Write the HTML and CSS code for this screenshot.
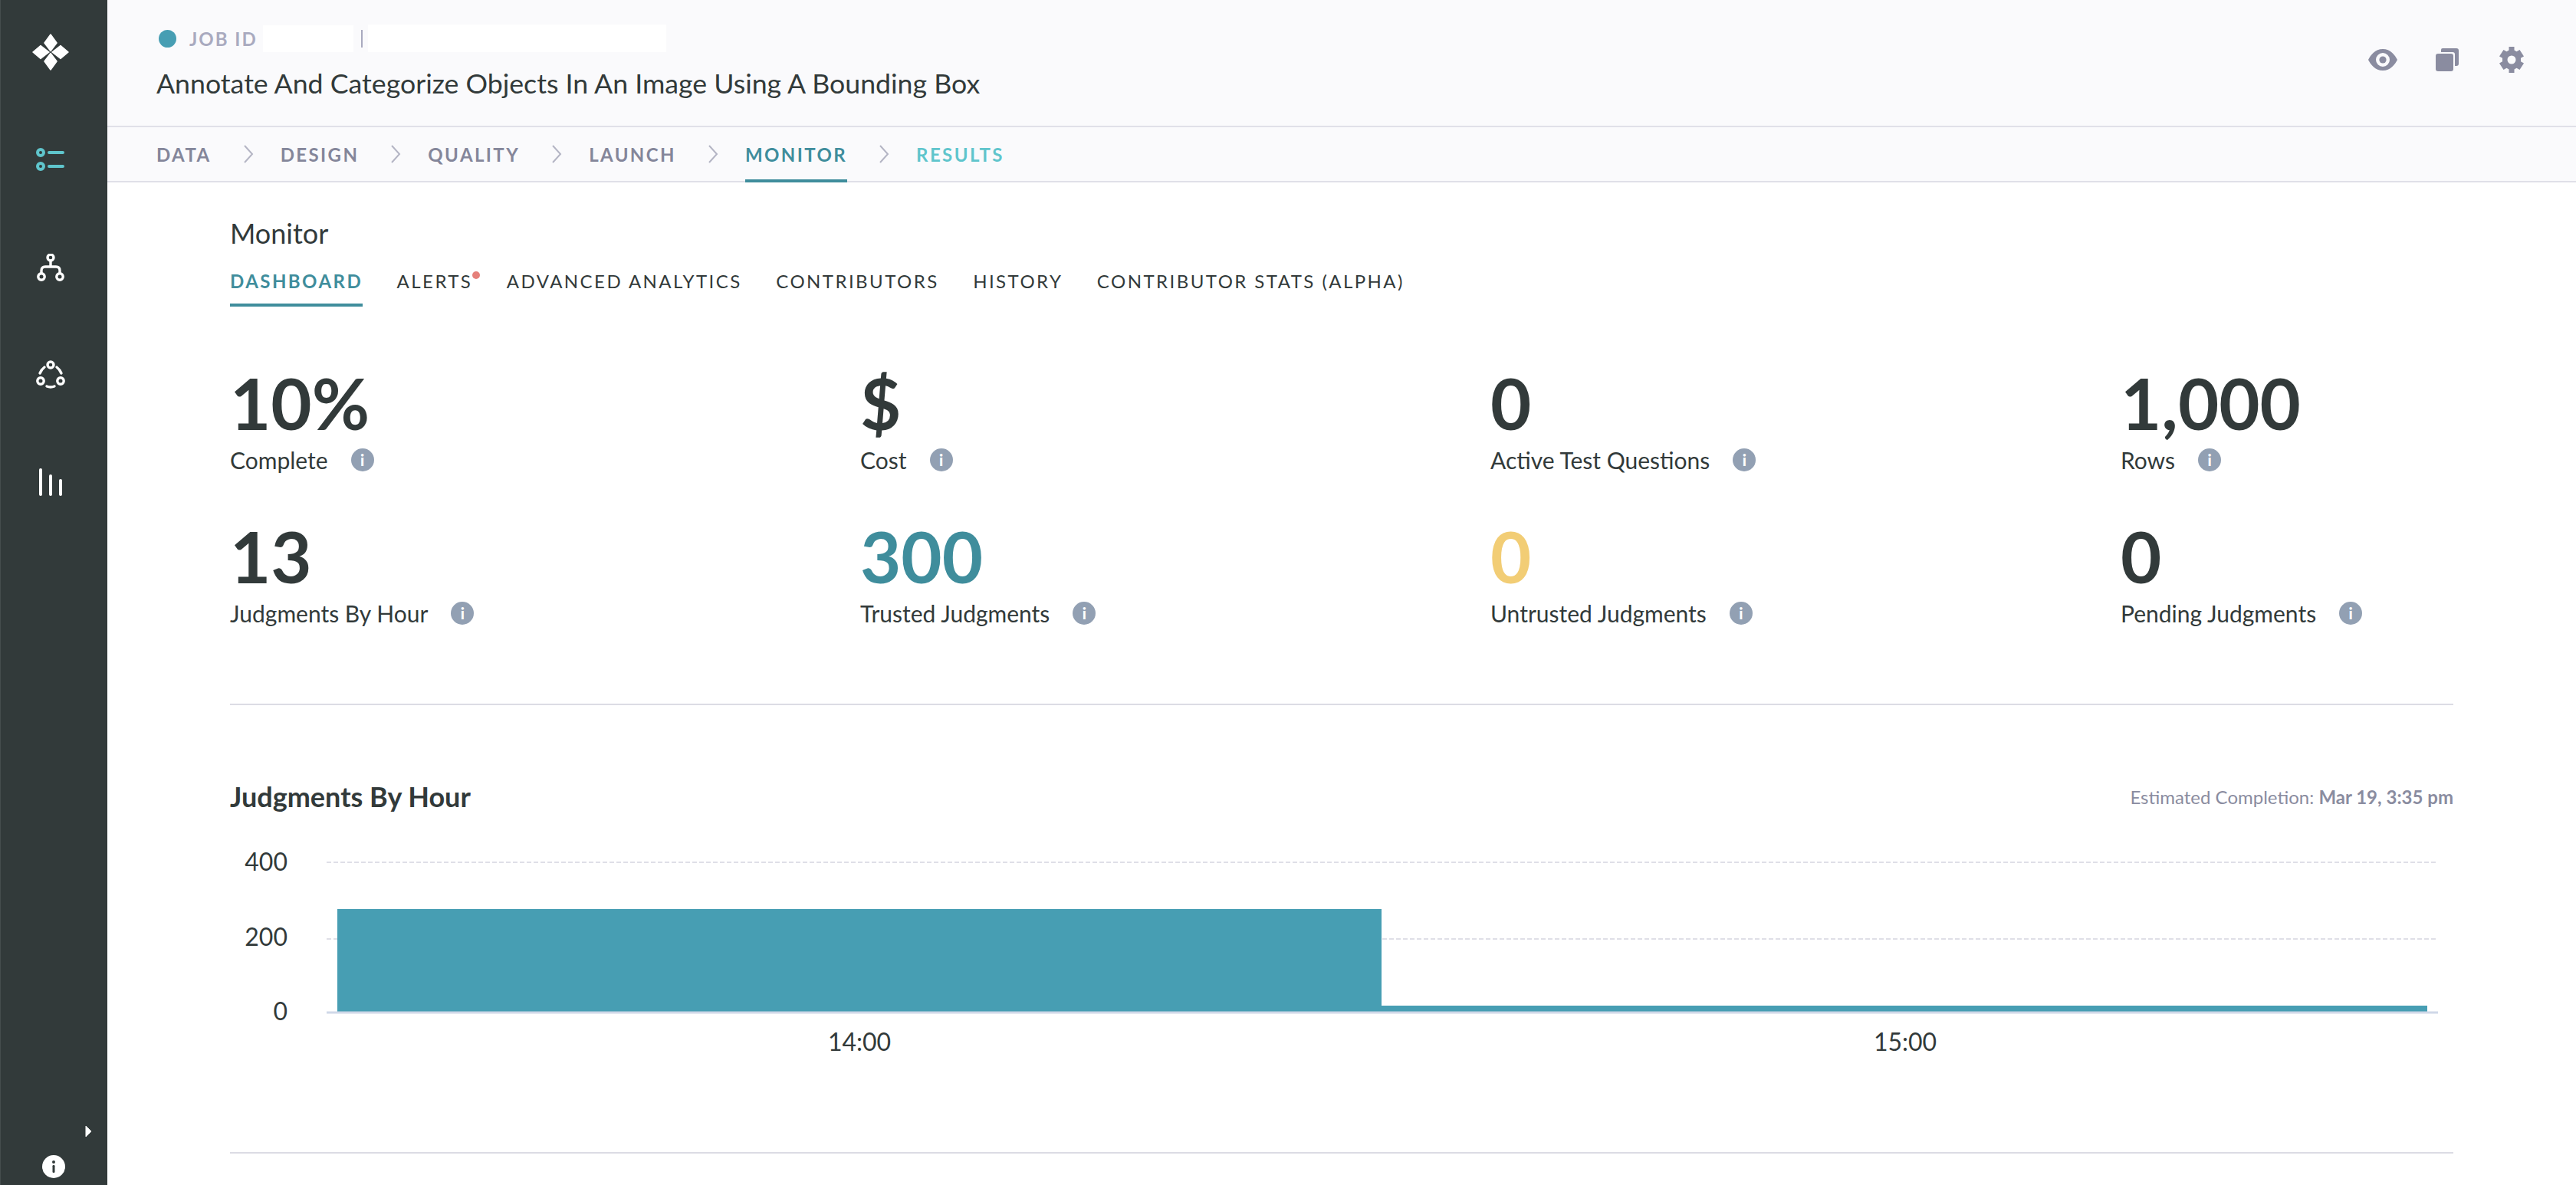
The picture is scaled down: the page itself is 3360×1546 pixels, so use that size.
FILE: index.html
```html
<!DOCTYPE html>
<html lang="en">
<head>
    <meta charset="UTF-8">
    <title>Monitor</title>
    <link rel="stylesheet" href="styles.css">
</head>
<body>
    <aside class="sidebar">
        <svg class="logo" viewBox="0 0 48 48" width="48" height="48">
            <g fill="#fff" stroke="#fff" stroke-width="1.5" stroke-linejoin="round">
                <path d="M24 1 L32 12 L24 22.500 L16 12 Z"/>
                <path d="M24 25.500 L32 36 L24 47 L16 36 Z"/>
                <path d="M1 24 L11 15.500 L22 24 L11 32.500 Z"/>
                <path d="M26 24 L37 15.500 L47 24 L37 32.500 Z"/>
            </g>
        </svg>
        <svg class="side-icon icon-list" viewBox="0 0 38 30" width="38" height="30">
            <g fill="none" stroke="#5fc5cc" stroke-width="4" stroke-linecap="round">
                <circle cx="6" cy="6" r="4"/>
                <circle cx="6" cy="24" r="4"/>
                <path d="M17 6 H35 M17 24 H35"/>
            </g>
        </svg>
        <svg class="side-icon icon-tree" viewBox="0 0 36 36" width="36" height="36">
            <g fill="none" stroke="#fff" stroke-width="3.4">
                <circle cx="18" cy="5" r="4"/>
                <circle cx="6" cy="30" r="4.2"/>
                <circle cx="30" cy="30" r="4.2"/>
                <path d="M18 9 V17 M6 26 V22 Q6 17 11 17 H25 Q30 17 30 22 V26"/>
            </g>
        </svg>
        <svg class="side-icon" viewBox="0 0 38 38" width="38" height="38">
            <g fill="none" stroke="#fff" stroke-width="3.4" stroke-linecap="round">
                <circle cx="19" cy="6" r="4"/>
                <circle cx="6" cy="27" r="4.2"/>
                <circle cx="32" cy="27" r="4.2"/>
                <path d="M5 17 Q7 12 11 9 M27 9 Q31 12 33 17 M14 34 Q19 36 24 34"/>
            </g>
        </svg>
        <svg class="side-icon" viewBox="0 0 34 36" width="34" height="36">
            <g fill="none" stroke="#fff" stroke-width="4" stroke-linecap="round">
                <path d="M4 2 V34 M17 10 V34 M30 16 V34"/>
            </g>
        </svg>
        <svg class="side-arrow" viewBox="0 0 9 16" width="9" height="16">
            <path d="M1 1 L8 8 L1 15 Z" fill="#fff" stroke="#fff" stroke-linejoin="round"/>
        </svg>
        <svg class="side-info" viewBox="0 0 30 30" width="30" height="30">
            <circle cx="15" cy="15" r="15" fill="#fff"/>
            <circle cx="15" cy="9" r="2" fill="#323a3a"/>
            <rect x="13.5" y="13" width="3" height="10" rx="1.2" fill="#323a3a"/>
        </svg>
    </aside>

    <div class="main">
        <header class="job-header">
            <div>
                <div class="job-meta">
                    <span class="status-dot"></span>
                    <span class="job-id">JOB ID</span>
                    <span class="redacted short"></span>
                    <span class="meta-sep"></span>
                    <span class="redacted long"></span>
                </div>
                <h1 class="job-title">Annotate And Categorize Objects In An Image Using A Bounding Box</h1>
            </div>
            <div class="job-actions">
                <svg viewBox="0 0 38 28" width="38" height="28">
                    <path fill-rule="evenodd" fill="#8a8ca0" d="M19 0 C29 0 35 8 38 14 C35 20 29 28 19 28 C9 28 3 20 0 14 C3 8 9 0 19 0 Z M19 5 A9 9 0 1 0 19 23 A9 9 0 1 0 19 5 Z"/>
                    <circle cx="19" cy="14" r="4.6" fill="#8a8ca0"/>
                </svg>
                <svg viewBox="0 0 30 30" width="30" height="30">
                    <path fill="#8a8ca0" d="M9 0 H27 Q30 0 30 3 V20 Q30 23 27 23 H25 V8 Q25 5 22 5 H7 V2 Q7 0 9 0 Z"/>
                    <rect x="0" y="7" width="23" height="23" rx="3" fill="#8a8ca0"/>
                </svg>
                <svg class="gear" viewBox="0 0 32 34" width="32" height="34">
                    <path fill-rule="evenodd" fill="#8a8ca0" d="M12.500 0 H19.500 V4.600 L22.500 6.300 L26.500 4 L32 12.500 L28 14.800 V19.200 L32 21.500 L26.500 30 L22.500 27.700 L19.500 29.400 V34 H12.500 V29.400 L9.500 27.700 L5.500 30 L0 21.500 L4 19.200 V14.800 L0 12.500 L5.500 4 L9.500 6.300 L12.500 4.600 Z M16 11.500 A5.500 5.500 0 1 0 16 22.500 A5.500 5.500 0 1 0 16 11.500 Z"/>
                </svg>
            </div>
        </header>

        <nav class="steps">
            <a class="step">DATA</a>
            <svg class="chevron" viewBox="0 0 14 24" width="14" height="24"><path d="M2 1 L12 12 L2 23" fill="none" stroke="#b4b5c4" stroke-width="2"/></svg>
            <a class="step">DESIGN</a>
            <svg class="chevron" viewBox="0 0 14 24" width="14" height="24"><path d="M2 1 L12 12 L2 23" fill="none" stroke="#b4b5c4" stroke-width="2"/></svg>
            <a class="step">QUALITY</a>
            <svg class="chevron" viewBox="0 0 14 24" width="14" height="24"><path d="M2 1 L12 12 L2 23" fill="none" stroke="#b4b5c4" stroke-width="2"/></svg>
            <a class="step">LAUNCH</a>
            <svg class="chevron" viewBox="0 0 14 24" width="14" height="24"><path d="M2 1 L12 12 L2 23" fill="none" stroke="#b4b5c4" stroke-width="2"/></svg>
            <a class="step active">MONITOR</a>
            <svg class="chevron" viewBox="0 0 14 24" width="14" height="24"><path d="M2 1 L12 12 L2 23" fill="none" stroke="#b4b5c4" stroke-width="2"/></svg>
            <a class="step next">RESULTS</a>
        </nav>

        <main class="content">
            <h2 class="page-title">Monitor</h2>
            <div class="tabs">
                <a class="tab active">DASHBOARD</a>
                <a class="tab alerts">ALERTS</a>
                <a class="tab">ADVANCED ANALYTICS</a>
                <a class="tab">CONTRIBUTORS</a>
                <a class="tab">HISTORY</a>
                <a class="tab">CONTRIBUTOR STATS (ALPHA)</a>
            </div>

            <section class="stats">
                <div class="stat">
                    <div class="stat-value">10%</div>
                    <div class="stat-label">Complete<span class="info">i</span></div>
                </div>
                <div class="stat">
                    <div class="stat-value">$</div>
                    <div class="stat-label">Cost<span class="info">i</span></div>
                </div>
                <div class="stat">
                    <div class="stat-value">0</div>
                    <div class="stat-label">Active Test Questions<span class="info">i</span></div>
                </div>
                <div class="stat">
                    <div class="stat-value">1,000</div>
                    <div class="stat-label">Rows<span class="info">i</span></div>
                </div>
                <div class="stat">
                    <div class="stat-value">13</div>
                    <div class="stat-label">Judgments By Hour<span class="info">i</span></div>
                </div>
                <div class="stat">
                    <div class="stat-value trusted">300</div>
                    <div class="stat-label">Trusted Judgments<span class="info">i</span></div>
                </div>
                <div class="stat">
                    <div class="stat-value untrusted">0</div>
                    <div class="stat-label">Untrusted Judgments<span class="info">i</span></div>
                </div>
                <div class="stat">
                    <div class="stat-value">0</div>
                    <div class="stat-label">Pending Judgments<span class="info">i</span></div>
                </div>
            </section>

            <section class="chart-section">
                <div class="chart-head">
                    <h3 class="chart-title">Judgments By Hour</h3>
                    <p class="estimate">Estimated Completion: <b>Mar 19, 3:35 pm</b></p>
                </div>
                <svg class="chart" viewBox="0 0 2900 280" width="2900" height="280">
                    <line class="grid" x1="126" y1="25" x2="2880" y2="25"/>
                    <line class="grid" x1="126" y1="125" x2="2880" y2="125"/>
                    <rect class="bar" x="140" y="86" width="1362" height="134"/>
                    <rect class="bar" x="1502" y="212" width="1364" height="8"/>
                    <line class="axis" x1="126" y1="221" x2="2880" y2="221"/>
                    <text class="tick" x="75" y="36" text-anchor="end">400</text>
                    <text class="tick" x="75" y="134" text-anchor="end">200</text>
                    <text class="tick" x="75" y="231" text-anchor="end">0</text>
                    <text class="tick" x="821" y="271" text-anchor="middle">14:00</text>
                    <text class="tick" x="2185" y="271" text-anchor="middle">15:00</text>
                </svg>
            </section>
        </main>
    </div>
</body>
</html>
```

FILE: styles.css
```css
* {
    box-sizing: border-box;
}

html,
body {
    height: 100%;
}

body {
    display: flex;
    margin: 0;
    overflow: hidden;
    background-color: #fff;
    color: #323a3a;
    font-family: Lato, "Open Sans", sans-serif;
}

.sidebar {
    position: relative;
    display: flex;
    flex: 0 0 140px;
    flex-direction: column;
    align-items: center;
    height: 1546px;
    padding: 44px 10px 0 0;
    background-color: #323a3a;
    border-left: 1px solid #454d4d;
}

.side-icon {
    display: block;
    margin-top: 103px;
}

.side-icon.icon-list {
    margin-top: 101px;
}

.side-icon.icon-tree {
    margin-top: 108px;
}

.side-arrow {
    position: absolute;
    top: 1468px;
    left: 110px;
}

.side-info {
    position: absolute;
    top: 1507px;
    left: 54px;
}

.main {
    flex: 1;
    min-width: 0;
}

.job-header {
    display: flex;
    justify-content: space-between;
    height: 166px;
    padding: 30px 68px 0 64px;
    background-color: #fafafc;
    border-bottom: 2px solid #e0e0e8;
}

.job-meta {
    display: flex;
    align-items: center;
    height: 40px;
}

.status-dot {
    width: 23px;
    height: 23px;
    margin-left: 3px;
    border-radius: 50%;
    background-color: #479eb3;
}

.job-id {
    margin-left: 17px;
    color: #a9aabf;
    font-size: 24px;
    font-weight: 700;
    letter-spacing: 2px;
}

.redacted {
    background-color: #fff;
}

.redacted.short {
    width: 118px;
    height: 35px;
    margin-left: 7px;
}

.redacted.long {
    width: 389px;
    height: 36px;
    margin-left: 7px;
}

.meta-sep {
    width: 2px;
    height: 23px;
    margin-left: 10px;
    background-color: #a9aabf;
}

.job-title {
    margin: 15px 0 0;
    font-size: 35.7px;
    font-weight: 400;
    line-height: 48px;
}

.job-actions {
    display: flex;
    align-items: center;
    gap: 50px;
    height: 96px;
}

.job-actions .gear {
    margin-left: 3px;
}

.steps {
    display: flex;
    align-items: center;
    gap: 0;
    height: 72px;
    padding-left: 64px;
    background-color: #fafafc;
    border-bottom: 2px solid #e0e0e8;
}

.step {
    position: relative;
    color: #84869a;
    font-size: 24px;
    font-weight: 700;
    letter-spacing: 2.4px;
}

.step.active {
    color: #3f8d9c;
}

.step.active::after {
    content: "";
    position: absolute;
    left: 0;
    right: 0;
    bottom: -22px;
    height: 4px;
    background-color: #3f8d9c;
}

.step.next {
    color: #5fc5cc;
}

.chevron {
    margin: 0 35px 0 41px;
}

.content {
    padding: 46px 160px 0;
}

.page-title {
    margin: 0;
    font-size: 36px;
    font-weight: 400;
    line-height: 40px;
}

.tabs {
    display: flex;
    gap: 44.5px;
    margin-top: 28px;
}

.tab {
    position: relative;
    padding-bottom: 14px;
    font-size: 24px;
    letter-spacing: 2.45px;
    line-height: 30px;
}

.tab.active {
    color: #3f8d9c;
    font-weight: 700;
    border-bottom: 4px solid #3f8d9c;
}

.tab.alerts::after {
    content: "";
    position: absolute;
    top: 2px;
    right: -10px;
    width: 10px;
    height: 10px;
    border-radius: 50%;
    background-color: #e5807a;
}

.stats {
    display: grid;
    grid-template-columns: repeat(3, 822px) 1fr;
    grid-auto-rows: 200px;
    height: 450px;
    margin-top: 70px;
    padding-bottom: 48px;
    border-bottom: 2px solid #dcdce4;
}

.stat-value {
    font-size: 92px;
    font-weight: 700;
    line-height: 112px;
}

.stat-value.trusted {
    color: #3f8d9c;
}

.stat-value.untrusted {
    color: #f2cd75;
}

.stat-label {
    display: flex;
    align-items: center;
    margin-top: -2px;
    font-size: 30px;
    line-height: 40px;
}

.info {
    display: flex;
    align-items: center;
    justify-content: center;
    width: 30px;
    height: 30px;
    margin-left: 30px;
    border-radius: 50%;
    background-color: #92a0b3;
    color: #fff;
    font-size: 20px;
    font-weight: 900;
}

.chart-section {
    padding-bottom: 123px;
    border-bottom: 2px solid #dcdce4;
}

.chart-head {
    display: flex;
    align-items: center;
    justify-content: space-between;
    height: 50px;
    margin-top: 94px;
}

.chart-title {
    margin: 0;
    font-size: 36px;
    font-weight: 700;
}

.estimate {
    margin: 0;
    color: #8a8ca0;
    font-size: 24px;
}

.chart {
    display: block;
    margin-top: 36px;
}

.chart .grid {
    stroke: #dfdfe7;
    stroke-width: 2;
    stroke-dasharray: 6 3;
}

.chart .axis {
    stroke: #d0d8e8;
    stroke-width: 3;
}

.chart .bar {
    fill: #479eb3;
}

.chart .tick {
    fill: #323a3a;
    font-family: Lato, sans-serif;
    font-size: 32px;
}
```
